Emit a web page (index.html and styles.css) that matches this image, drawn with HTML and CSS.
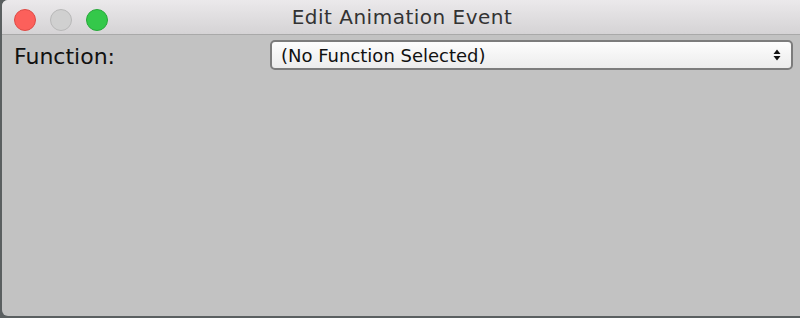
FILE: index.html
```html
<!DOCTYPE html>
<html>
<head>
<meta charset="utf-8">
<link rel="stylesheet" href="styles.css">
</head>
<body>
<div class="desktop">
  <div class="window">
    <div class="titlebar">
      <div class="lights">
        <span class="light red"></span>
        <span class="light gray"></span>
        <span class="light green"></span>
      </div>
      <div class="title">Edit Animation Event</div>
    </div>
    <div class="content">
      <div class="row">
        <div class="label">Function:</div>
        <div class="select">
          <span class="select-text">(No Function Selected)</span>
          <svg class="arrows" width="8" height="12" viewBox="0 0 8 12"><path d="M4 0.5 L7.5 5 L0.5 5 Z M4 11.5 L7.5 7 L0.5 7 Z" fill="#111"/></svg>
        </div>
      </div>
    </div>
  </div>
</div>
</body>
</html>
```
FILE: styles.css
```css
html, body {
  margin: 0;
  padding: 0;
  width: 800px;
  height: 318px;
  overflow: hidden;
  background: #5a5f60;
}
.desktop {
  width: 800px;
  height: 318px;
  padding-left: 2px;
  box-sizing: border-box;
}
.window {
  width: 810px;
  height: 316px;
  border-radius: 6px 6px 0 6px;
  overflow: hidden;
  background: #c2c2c2;
  display: flex;
  flex-direction: column;
}
.titlebar {
  height: 34px;
  flex: none;
  background: linear-gradient(#ebe9eb, #d5d3d5);
  border-bottom: 1px solid #a9a9a9;
  display: flex;
  align-items: center;
  position: relative;
}
.lights {
  display: flex;
  gap: 14px;
  padding-left: 12px;
  padding-top: 5px;
}
.light {
  width: 22px;
  height: 22px;
  border-radius: 50%;
  box-sizing: border-box;
}
.red { background: #fc605b; border: 1px solid #de4a45; }
.gray { background: #d0d0d0; border: 1px solid #b8b8b8; }
.green { background: #34c84a; border: 1px solid #27a83a; }
.title {
  position: absolute;
  left: 0;
  width: 800px;
  top: 5px;
  text-align: center;
  font-family: "DejaVu Sans", sans-serif;
  font-size: 20px;
  letter-spacing: 0.5px;
  color: #333;
}
.content {
  padding: 5px 0 0 12px;
}
.row {
  display: flex;
  align-items: center;
}
.label {
  width: 256px;
  font-family: "DejaVu Sans", sans-serif;
  font-size: 22px;
  color: #111;
  padding-top: 2px;
}
.select {
  width: 523px;
  height: 30px;
  box-sizing: border-box;
  border: 2px solid #7c7c7c;
  border-radius: 5px;
  background: linear-gradient(#fdfdfd, #ececec);
  display: flex;
  align-items: center;
  justify-content: space-between;
  padding: 0 10px 0 9px;
}
.select-text {
  font-family: "DejaVu Sans", sans-serif;
  font-size: 18px;
  color: #111;
}
```
